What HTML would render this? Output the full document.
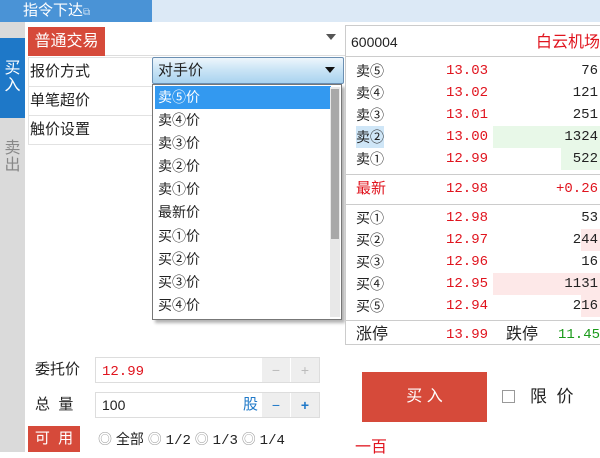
<!DOCTYPE html>
<html><head><meta charset="utf-8"><style>
*{margin:0;padding:0;box-sizing:border-box}
body{width:600px;height:452px;overflow:hidden;background:#fff;position:relative;font-family:"Liberation Sans","Noto Sans CJK SC","WenQuanYi Zen Hei",sans-serif;font-size:14px;color:#222}
.a{position:absolute}
.red{color:#e0141e}
.row{position:absolute;left:0;width:255px;height:22px;line-height:22px}
.row span{position:absolute}
.m{font-family:"Liberation Mono","Noto Sans CJK SC",monospace;font-size:14px}
.it{position:absolute;left:2px;width:176px;height:23px;line-height:23px;padding-left:3px;font-size:14px}
</style></head><body>
<div class="a" style="left:0;top:0;width:600px;height:22px;background:#dce9f6"></div>
<div class="a" style="left:0;top:0;width:152px;height:22px;background:#4a93d6;color:#fff;line-height:22px;padding-left:23px;font-size:15px">指令下达<span style="font-size:10px;opacity:.7">⧉</span></div>
<div class="a" style="left:0;top:22px;width:25px;height:430px;background:#dadada"></div>
<div class="a" style="left:0;top:38px;width:25px;height:80px;background:#1e78c8;color:#fff;font-size:16px;text-align:center;padding-top:22px;line-height:17px">买<br>入</div>
<div class="a" style="left:20px;top:73px;width:0;height:0;border:5px solid transparent;border-right-color:#fff"></div>
<div class="a" style="left:0;top:140px;width:25px;color:#888;font-size:16px;text-align:center;line-height:17px">卖<br>出</div>
<div class="a" style="left:28px;top:28px;width:317px;height:28px;border-bottom:1px solid #ddd"></div>
<div class="a" style="left:28px;top:27px;width:77px;height:29px;background:#d64a3a;color:#fff;font-size:16px;line-height:29px;text-align:center">普通交易</div>
<div class="a" style="left:326px;top:34px;border:5px solid transparent;border-top:6px solid #555"></div>
<div class="a" style="left:28px;top:57px;width:124px;height:88px;border:1px solid #e2e2e2;border-right:none"></div>
<div class="a" style="left:30px;top:57px;line-height:29px;font-size:15px">报价方式<br>单笔超价<br>触价设置</div>
<div class="a" style="left:28px;top:86px;width:124px;border-top:1px solid #e2e2e2"></div>
<div class="a" style="left:28px;top:115px;width:124px;border-top:1px solid #e2e2e2"></div>
<div class="a" style="left:152px;top:57px;width:192px;height:27px;border:1px solid #6b8fb2;border-radius:2px;background:linear-gradient(#eef6fc,#c8e3f5 50%,#a9d3ef);line-height:25px;padding-left:5px;font-size:15px">对手价</div>
<div class="a" style="left:325px;top:67px;border:5px solid transparent;border-top:6px solid #111"></div>
<div class="a" style="left:152px;top:84px;width:190px;height:236px;border:1px solid #777;background:#fff;box-shadow:3px 3px 3px rgba(0,0,0,.3)">
<div class="it" style="top:1px;background:#3399f0;color:#fff">卖⑤价</div>
<div class="it" style="top:24px">卖④价</div>
<div class="it" style="top:47px">卖③价</div>
<div class="it" style="top:70px">卖②价</div>
<div class="it" style="top:93px">卖①价</div>
<div class="it" style="top:116px">最新价</div>
<div class="it" style="top:140px">买①价</div>
<div class="it" style="top:163px">买②价</div>
<div class="it" style="top:186px">买③价</div>
<div class="it" style="top:209px">买④价</div>
<div class="a" style="left:177px;top:2px;width:10px;height:230px;background:#e8e8e8"></div>
<div class="a" style="left:178px;top:4px;width:8px;height:150px;background:#a8a8a8"></div>
</div>
<div class="a" style="left:345px;top:25px;width:255px;height:320px;border:1px solid #ccc;border-right:none;background:#fff">
<div class="row" style="top:4px;height:25px;line-height:25px"><span style="left:5px;font-size:14px">600004</span><span class="red" style="left:190px;font-size:16px">白云机场</span></div>
<div class="a" style="left:0;top:30px;width:255px;border-top:1px solid #ccc"></div>
<div class="a" style="left:147px;top:100px;width:108px;height:22px;background:#e8f8e8"></div>
<div class="a" style="left:215px;top:122px;width:40px;height:22px;background:#e8f8e8"></div>
<div class="row" style="top:34px"><span style="left:10px">卖⑤</span><span class="red m" style="left:100px">13.03</span><span class="m" style="right:3px">76</span></div>
<div class="row" style="top:56px"><span style="left:10px">卖④</span><span class="red m" style="left:100px">13.02</span><span class="m" style="right:3px">121</span></div>
<div class="row" style="top:78px"><span style="left:10px">卖③</span><span class="red m" style="left:100px">13.01</span><span class="m" style="right:3px">251</span></div>
<div class="row" style="top:100px"><span style="left:10px;background:#cfe6f7">卖②</span><span class="red m" style="left:100px">13.00</span><span class="m" style="right:3px">1324</span></div>
<div class="row" style="top:122px"><span style="left:10px">卖①</span><span class="red m" style="left:100px">12.99</span><span class="m" style="right:3px">522</span></div>
<div class="a" style="left:0;top:148px;width:255px;border-top:1px solid #ccc"></div>
<div class="row" style="top:150px;height:26px;line-height:26px"><span class="red" style="left:10px;font-size:15px">最新</span><span class="red m" style="left:100px">12.98</span><span class="red m" style="right:3px">+0.26</span></div>
<div class="a" style="left:0;top:178px;width:255px;border-top:1px solid #ccc"></div>
<div class="a" style="left:235px;top:203px;width:20px;height:22px;background:#fde8e8"></div>
<div class="a" style="left:147px;top:247px;width:108px;height:22px;background:#fde8e8"></div>
<div class="a" style="left:235px;top:269px;width:20px;height:22px;background:#fde8e8"></div>
<div class="row" style="top:181px"><span style="left:10px">买①</span><span class="red m" style="left:100px">12.98</span><span class="m" style="right:3px">53</span></div>
<div class="row" style="top:203px"><span style="left:10px">买②</span><span class="red m" style="left:100px">12.97</span><span class="m" style="right:3px">244</span></div>
<div class="row" style="top:225px"><span style="left:10px">买③</span><span class="red m" style="left:100px">12.96</span><span class="m" style="right:3px">16</span></div>
<div class="row" style="top:247px"><span style="left:10px">买④</span><span class="red m" style="left:100px">12.95</span><span class="m" style="right:3px">1131</span></div>
<div class="row" style="top:269px"><span style="left:10px">买⑤</span><span class="red m" style="left:100px">12.94</span><span class="m" style="right:3px">216</span></div>
<div class="a" style="left:0;top:294px;width:255px;border-top:1px solid #ccc"></div>
<div class="row" style="top:297px;height:24px;line-height:24px"><span style="left:10px;font-size:16px">涨停</span><span class="red m" style="left:100px">13.99</span><span style="left:160px;font-size:16px">跌停</span><span class="m" style="left:212px;color:#1a9a1a">11.45</span></div>
</div>
<div class="a" style="left:35px;top:357px;line-height:26px;font-size:15px">委托价</div>
<div class="a" style="left:95px;top:357px;width:225px;height:26px;border:1px solid #ddd;line-height:24px;padding-left:6px" ><span class="red m">12.99</span></div>
<div class="a" style="left:262px;top:358px;width:28px;height:24px;background:#eee;color:#bbb;text-align:center;line-height:24px">−</div>
<div class="a" style="left:291px;top:358px;width:28px;height:24px;background:#eee;color:#bbb;text-align:center;line-height:24px">+</div>
<div class="a" style="left:35px;top:392px;line-height:26px;font-size:15px">总&nbsp;&nbsp;量</div>
<div class="a" style="left:95px;top:392px;width:225px;height:26px;border:1px solid #ddd;line-height:24px;padding-left:6px">100</div>
<div class="a" style="left:243px;top:392px;line-height:26px;color:#1e78c8;font-size:15px">股</div>
<div class="a" style="left:262px;top:393px;width:28px;height:24px;background:#eee;color:#1e78c8;text-align:center;line-height:24px">−</div>
<div class="a" style="left:291px;top:393px;width:28px;height:24px;background:#eee;color:#1e78c8;text-align:center;line-height:24px;font-weight:bold">+</div>
<div class="a" style="left:28px;top:426px;width:52px;height:26px;background:#d64a3a;color:#fff;line-height:26px;text-align:center;font-size:15px">可&nbsp;&nbsp;用</div>
<div class="a" style="left:98px;top:426px;line-height:26px;font-size:14px;white-space:nowrap"><span style="color:#999">◎</span> 全部 <span style="color:#999">◎</span> <span class="m">1/2</span> <span style="color:#999">◎</span> <span class="m">1/3</span> <span style="color:#999">◎</span> <span class="m">1/4</span></div>
<div class="a" style="left:362px;top:372px;width:125px;height:50px;background:#d64a3a;color:#fff;text-align:center;line-height:50px;font-size:16px">买&nbsp;入</div>
<div class="a" style="left:502px;top:390px;width:13px;height:13px;border:1px solid #999"></div>
<div class="a" style="left:530px;top:384px;font-size:17px;line-height:26px">限&nbsp;&nbsp;价</div>
<div class="a red" style="left:355px;top:438px;font-size:16px;line-height:20px">一百</div>
</body></html>
